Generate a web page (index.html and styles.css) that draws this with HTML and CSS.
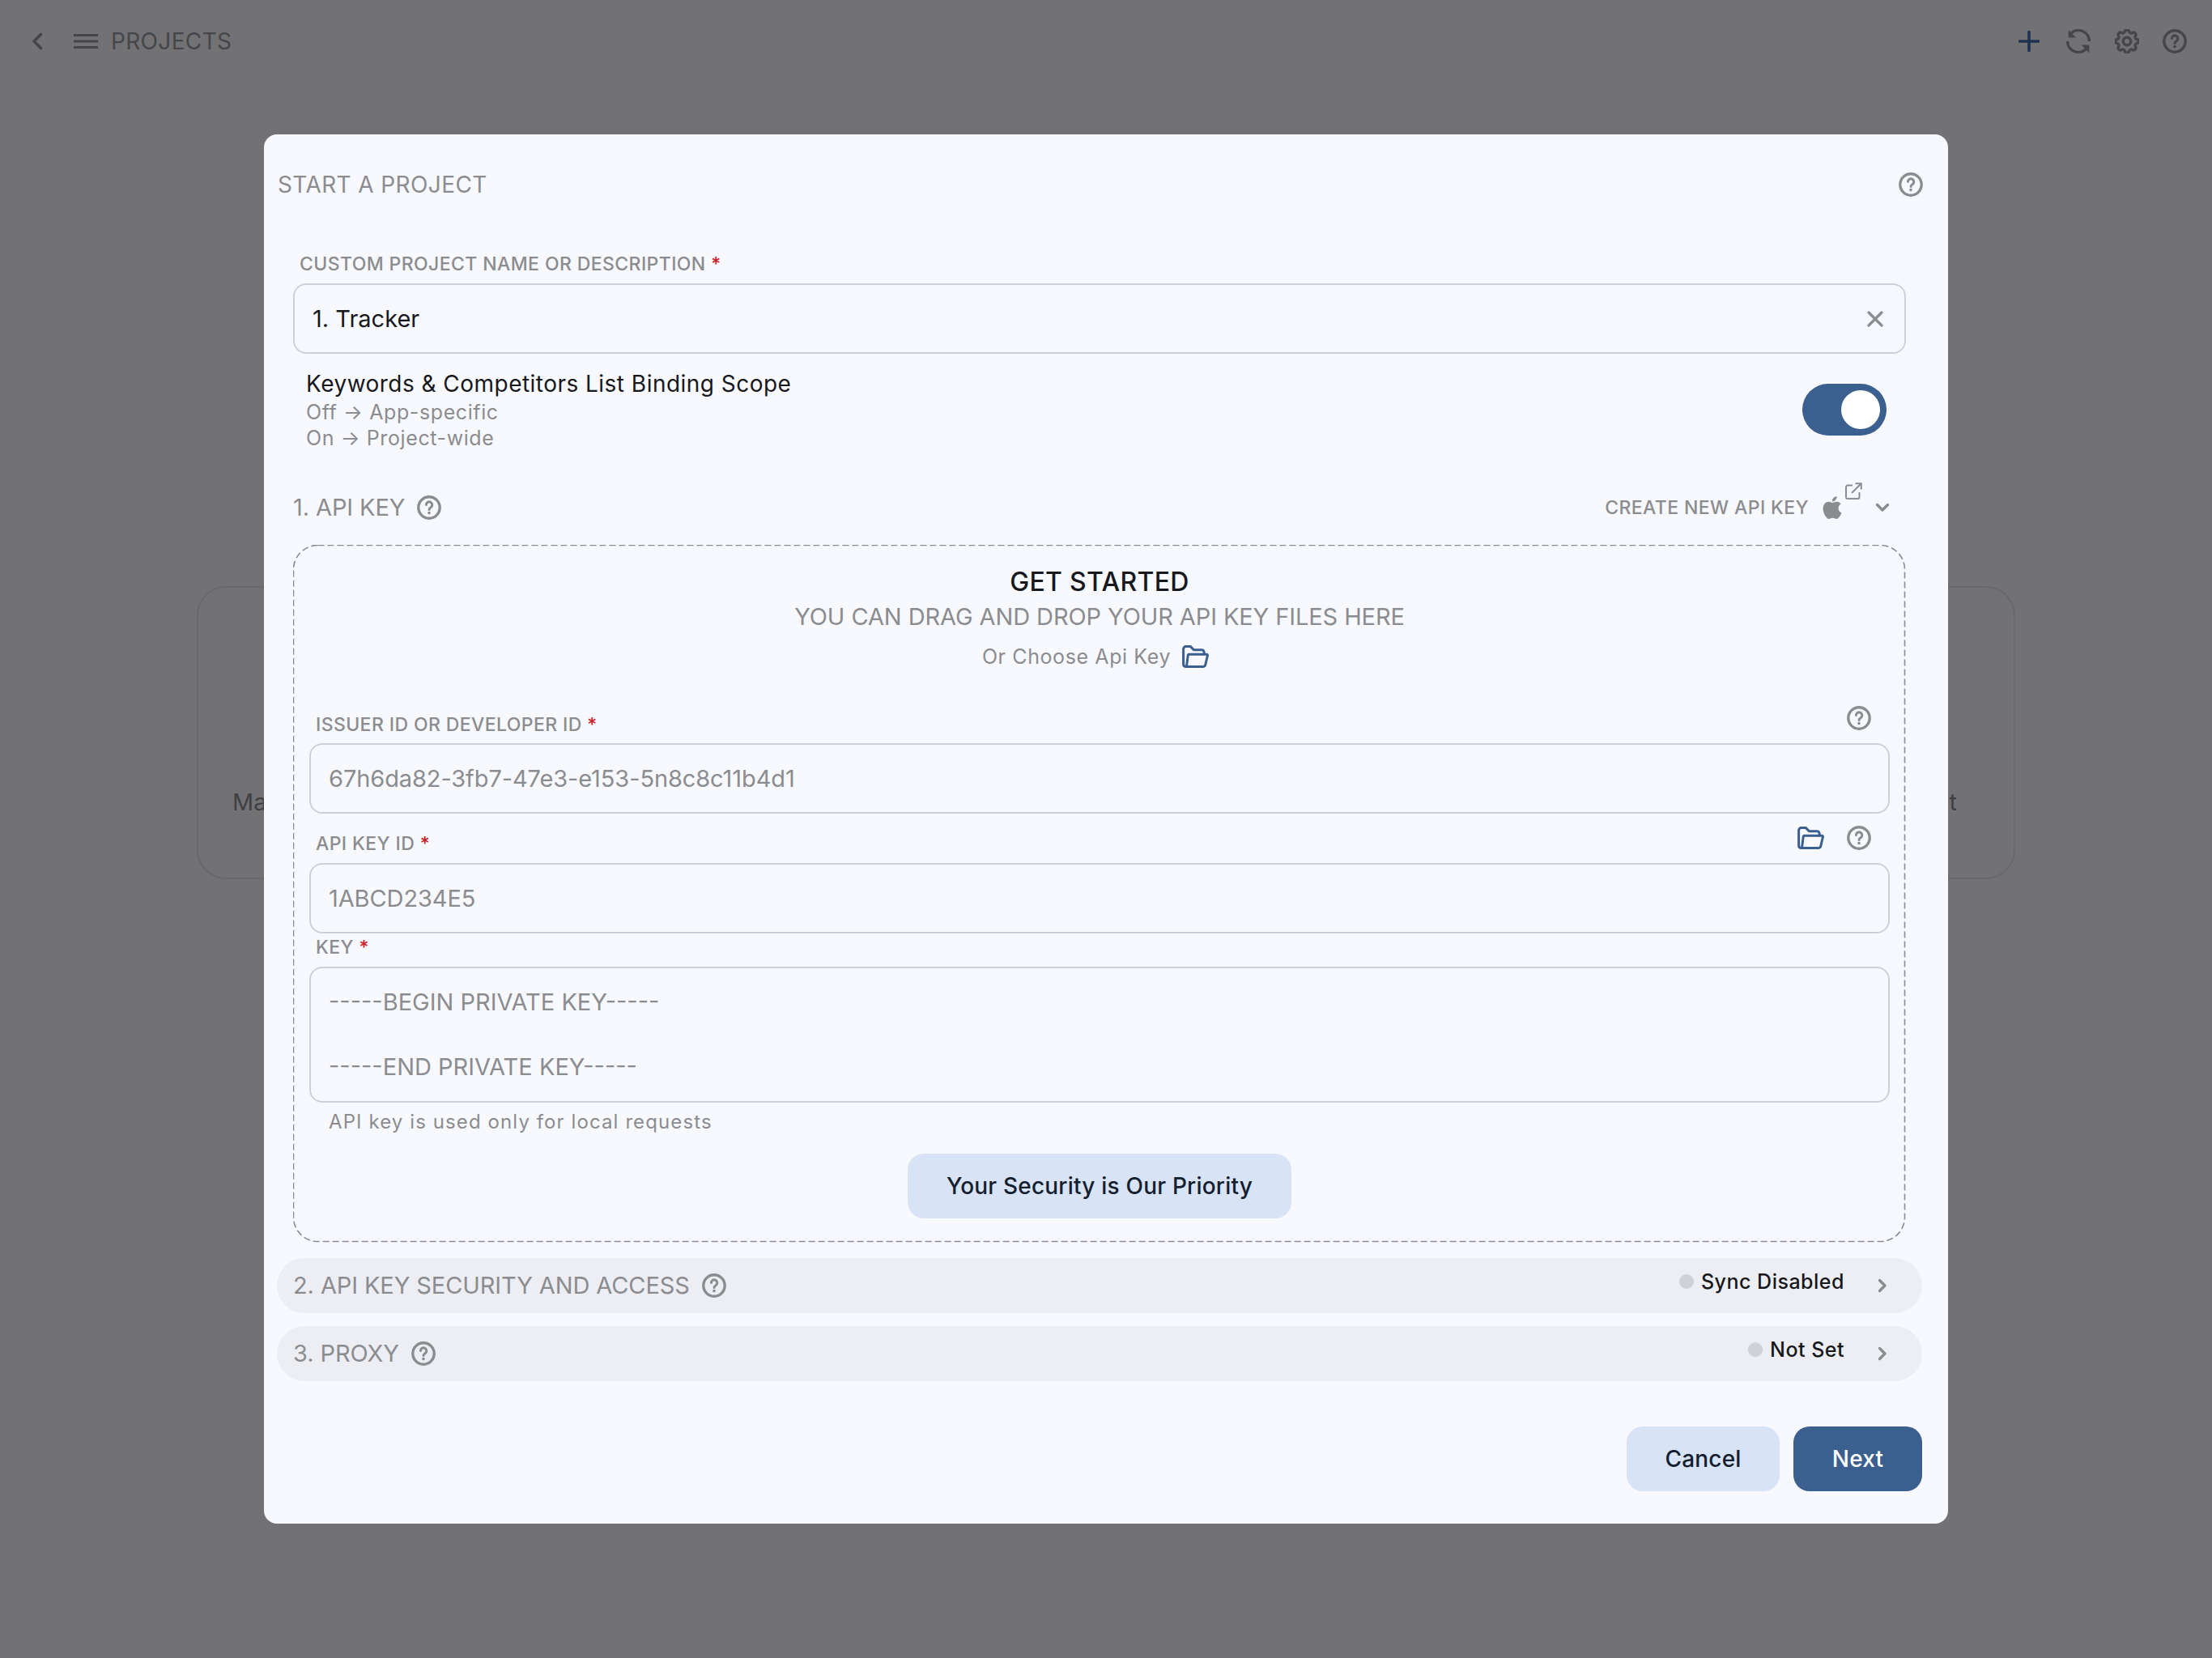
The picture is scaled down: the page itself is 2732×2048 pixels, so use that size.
FILE: index.html
```html
<!DOCTYPE html>
<html lang="en">
<head>
<meta charset="utf-8">
<title>Projects</title>
<link rel="stylesheet" href="styles.css">
</head>
<body>
<svg class="defs" width="0" height="0" aria-hidden="true">
  <defs>
    <symbol id="help" viewBox="0 0 30 30">
      <circle cx="15" cy="15" r="13.2" fill="none" stroke="currentColor" stroke-width="3.4"/>
      <path d="M11.4 11.6a3.7 3.7 0 1 1 5.7 3.1c-1.2.8-2 1.3-2 2.7" fill="none" stroke="currentColor" stroke-width="3" stroke-linecap="round"/>
      <circle cx="15" cy="21.6" r="1.8" fill="currentColor"/>
    </symbol>
    <symbol id="folder" viewBox="0 0 33 28">
      <path d="M5 26.4H4.4A3 3 0 0 1 1.6 23.4V4.6A3 3 0 0 1 4.6 1.6H10.4L14.4 5.8H24.2A3 3 0 0 1 27.2 8.8V11" fill="none" stroke="currentColor" stroke-width="3" stroke-linejoin="round" stroke-linecap="round"/>
      <path d="M8.8 11.2H30.2A1.3 1.3 0 0 1 31.4 12.8L28.8 24A3 3 0 0 1 25.9 26.4H4.4A1.2 1.2 0 0 0 5.6 25.4L7.2 12.6A1.6 1.6 0 0 1 8.8 11.2Z" fill="none" stroke="currentColor" stroke-width="3" stroke-linejoin="round"/>
    </symbol>
    <symbol id="chev-right" viewBox="0 0 12 18">
      <path d="M2.5 2.5L9 9L2.5 15.5" fill="none" stroke="currentColor" stroke-width="3.4" stroke-linecap="round" stroke-linejoin="round"/>
    </symbol>
  </defs>
</svg>

<div class="page">
  <header class="topbar">
    <div class="topbar-left">
      <svg class="back" viewBox="0 0 14 22" width="14" height="22"><path d="M11.5 2.5L3 11L11.5 19.5" fill="none" stroke="currentColor" stroke-width="3.6" stroke-linecap="round" stroke-linejoin="round"/></svg>
      <svg class="burger" viewBox="0 0 30 20" width="30" height="20"><path d="M0 2.5H30M0 10H30M0 17.5H30" fill="none" stroke="currentColor" stroke-width="3.2"/></svg>
      <span class="topbar-title">PROJECTS</span>
    </div>
    <div class="topbar-right">
      <svg class="plus" viewBox="0 0 26 26" width="26" height="26"><path d="M13 1.5V24.5M1.5 13H24.5" fill="none" stroke="currentColor" stroke-width="3.6" stroke-linecap="round"/></svg>
      <svg class="top-icon" viewBox="0 0 30 30" width="30" height="30"><path d="M5.4 5.5A13.4 13.4 0 0 1 28.4 15" fill="none" stroke="currentColor" stroke-width="3.4"/><path d="M1.6 15A13.4 13.4 0 0 0 24.6 24.5" fill="none" stroke="currentColor" stroke-width="3.4"/><path d="M2.6 1V10.4H12Z" fill="currentColor"/><path d="M28.4 29.4V19.6H18.6Z" fill="currentColor"/></svg>
      <svg class="top-icon" viewBox="3 2.5 18 19" width="30" height="30"><path d="M10.325 4.317c.426 -1.756 2.924 -1.756 3.35 0a1.724 1.724 0 0 0 2.573 1.066c1.543 -.94 3.31 .826 2.37 2.37a1.724 1.724 0 0 0 1.065 2.572c1.756 .426 1.756 2.924 0 3.35a1.724 1.724 0 0 0 -1.066 2.573c.94 1.543 -.826 3.31 -2.37 2.37a1.724 1.724 0 0 0 -2.572 1.065c-.426 1.756 -2.924 1.756 -3.35 0a1.724 1.724 0 0 0 -2.573 -1.066c-1.543 .94 -3.31 -.826 -2.37 -2.37a1.724 1.724 0 0 0 -1.065 -2.572c-1.756 -.426 -1.756 -2.924 0 -3.35a1.724 1.724 0 0 0 1.066 -2.573c-.94 -1.543 .826 -3.31 2.37 -2.37c1 .608 2.296 .07 2.572 -1.065z" fill="none" stroke="currentColor" stroke-width="2.2"/><circle cx="12" cy="12" r="3" fill="none" stroke="currentColor" stroke-width="2.2"/></svg>
      <svg class="top-icon" width="30" height="30"><use href="#help"/></svg>
    </div>
  </header>

  <main class="backdrop-content">
    <div class="bg-card">
      <span>Ma</span>
      <span>t</span>
    </div>
  </main>

  <section class="modal">
    <div class="modal-title-row">
      <h2 class="modal-title">START A PROJECT</h2>
      <svg class="help" width="30" height="30"><use href="#help"/></svg>
    </div>

    <div class="modal-body">
      <div class="label label-first">CUSTOM PROJECT NAME OR DESCRIPTION <span class="req">*</span></div>
      <div class="input input-name">
        <span class="input-value">1. Tracker</span>
        <svg class="clear" viewBox="0 0 20 20" width="20" height="20"><path d="M2 2L18 18M18 2L2 18" fill="none" stroke="currentColor" stroke-width="3.2" stroke-linecap="round"/></svg>
      </div>

      <div class="scope">
        <div class="scope-text">
          <div class="scope-title">Keywords &amp; Competitors List Binding Scope</div>
          <div class="scope-line">Off → App-specific</div>
          <div class="scope-line">On → Project-wide</div>
        </div>
        <div class="toggle"><span class="knob"></span></div>
      </div>

      <div class="api-head">
        <div class="section-title">1. API KEY <svg class="help" width="30" height="30"><use href="#help"/></svg></div>
        <div class="api-link">
          <span>CREATE NEW API KEY</span>
          <span class="apple-wrap">
            <svg class="apple" viewBox="0 0 24 24" width="28" height="30"><path fill="currentColor" d="M12.152 6.896c-.948 0-2.415-1.078-3.96-1.04-2.04.027-3.91 1.183-4.961 3.014-2.117 3.675-.546 9.103 1.519 12.09 1.013 1.454 2.208 3.09 3.792 3.039 1.52-.065 2.09-.987 3.935-.987 1.831 0 2.35.987 3.96.948 1.637-.026 2.676-1.48 3.676-2.948 1.156-1.688 1.636-3.325 1.662-3.415-.039-.013-3.182-1.221-3.22-4.857-.026-3.04 2.48-4.494 2.597-4.559-1.429-2.09-3.623-2.324-4.39-2.376-2-.156-3.675 1.09-4.61 1.09zM15.53 3.83c.843-1.012 1.4-2.427 1.245-3.83-1.207.052-2.662.805-3.532 1.818-.78.896-1.454 2.338-1.273 3.714 1.338.104 2.715-.688 3.559-1.701"/></svg>
            <svg class="ext" viewBox="0 0 21 21" width="21" height="21"><path d="M9 3.5H3A2 2 0 0 0 1 5.5V18A2 2 0 0 0 3 20H15.5A2 2 0 0 0 17.5 18V12M8 13L19.5 1.5M12.5 1.2H19.8V8.5" fill="none" stroke="currentColor" stroke-width="2"/></svg>
          </span>
          <svg class="chev-down" viewBox="0 0 18 12" width="18" height="12"><path d="M2.5 2.5L9 9L15.5 2.5" fill="none" stroke="currentColor" stroke-width="3.4" stroke-linecap="round" stroke-linejoin="round"/></svg>
        </div>
      </div>

      <div class="dropzone">
        <svg class="dash" width="1992" height="862"><rect x="0.5" y="0.5" width="1990" height="860" rx="30" ry="30"/></svg>
        <div class="get-started">GET STARTED</div>
        <div class="drag">YOU CAN DRAG AND DROP YOUR API KEY FILES HERE</div>
        <div class="choose"><span>Or Choose Api Key</span><svg class="folder" width="33" height="28"><use href="#folder"/></svg></div>

        <div class="field-head field-head-issuer">
          <div class="label">ISSUER ID OR DEVELOPER ID <span class="req">*</span></div>
          <svg class="help" width="30" height="30"><use href="#help"/></svg>
        </div>
        <div class="input input-field"><span class="input-muted id-value">67h6da82-3fb7-47e3-e153-5n8c8c11b4d1</span></div>

        <div class="field-head field-head-key">
          <div class="label">API KEY ID <span class="req">*</span></div>
          <div class="field-icons">
            <svg class="folder" width="33" height="28"><use href="#folder"/></svg>
            <svg class="help" width="30" height="30"><use href="#help"/></svg>
          </div>
        </div>
        <div class="input input-field"><span class="input-muted id-value">1ABCD234E5</span></div>

        <div class="label label-key">KEY <span class="req">*</span></div>
        <div class="input textarea">
          <span class="input-muted">-----BEGIN PRIVATE KEY-----</span>
          <span class="input-muted blank">&nbsp;</span>
          <span class="input-muted">-----END PRIVATE KEY-----</span>
        </div>
        <div class="note">API key is used only for local requests</div>
        <div class="security-wrap"><button class="btn btn-security">Your Security is Our Priority</button></div>
      </div>
    </div>

    <div class="accordion acc-security">
      <div class="section-title">2. API KEY SECURITY AND ACCESS <svg class="help" width="30" height="30"><use href="#help"/></svg></div>
      <div class="acc-right">
        <span class="status"><i class="dot"></i>Sync Disabled</span>
        <svg class="chev" width="12" height="18"><use href="#chev-right"/></svg>
      </div>
    </div>
    <div class="accordion acc-proxy">
      <div class="section-title">3. PROXY <svg class="help" width="30" height="30"><use href="#help"/></svg></div>
      <div class="acc-right">
        <span class="status"><i class="dot"></i>Not Set</span>
        <svg class="chev" width="12" height="18"><use href="#chev-right"/></svg>
      </div>
    </div>

    <div class="footer">
      <button class="btn btn-cancel">Cancel</button>
      <button class="btn btn-next">Next</button>
    </div>
  </section>
</div>
</body>
</html>
```

FILE: styles.css
```css
* { box-sizing: border-box; }
html, body { margin: 0; padding: 0; }
body {
  width: 2732px;
  height: 2048px;
  overflow: hidden;
  background: #727274;
  font-family: Inter, "Liberation Sans", sans-serif;
  color: #17181c;
}
.defs { position: absolute; }
svg { display: block; flex: none; }

.page { position: relative; width: 2732px; height: 2048px; }

.topbar {
  height: 102px;
  display: flex;
  align-items: center;
  justify-content: space-between;
  padding: 0 31px 0 39px;
  color: #45464a;
}
.topbar-left { display: flex; align-items: center; }
.back { margin-right: 38px; }
.burger { margin-right: 16px; }
.topbar-title { font-size: 28px; line-height: 40px; letter-spacing: 0.35px; }
.topbar-right { display: flex; align-items: center; }
.plus { color: #1f3350; margin-right: 33px; }
.top-icon { margin-left: 29.5px; }
.plus + .top-icon { margin-left: 0; }

.backdrop-content { padding: 622px 243px 0; }
.bg-card {
  height: 362px;
  border: 2px solid #69696b;
  border-radius: 36px;
  padding: 0 70px 75px 42px;
  display: flex;
  align-items: flex-end;
  justify-content: space-between;
  font-size: 29px;
  line-height: 36px;
  color: #3f4044;
}

.modal {
  position: absolute;
  left: 326px;
  top: 166px;
  width: 2080px;
  height: 1716px;
  padding: 38px 32px 39px 16px;
  background: #f8f9fe;
  border-radius: 16px;
  display: flex;
  flex-direction: column;
  color: #17181c;
}
.modal-title-row {
  height: 48px;
  display: flex;
  align-items: center;
  justify-content: space-between;
  margin-right: -1px;
}
.modal-title { margin: 0; padding-left: 1px; font-size: 28px; line-height: 40px; font-weight: 400; letter-spacing: 0.4px; color: #8b8c90; }
.help { color: #8b8c90; }
.modal-body { padding: 0 20px; display: flex; flex-direction: column; }

.label { height: 30px; font-size: 23px; line-height: 30px; letter-spacing: 0.4px; font-weight: 500; color: #8b8c90; padding-left: 8px; }
.req { color: #c9202a; }
.label-first { margin-top: 59px; }

.input {
  border: 2px solid #d0d1d6;
  border-radius: 16px;
  display: flex;
  align-items: center;
  padding: 0 22px;
  font-size: 29px;
  line-height: 40px;
}
.input-name { height: 87px; margin-top: 9px; justify-content: space-between; }
.input-value { color: #17181c; }
.input-muted { color: #8b8c90; }
.id-value { letter-spacing: -0.1px; }
.clear { color: #8b8c90; margin-right: 4px; }
.input-field { height: 87px; }

.scope {
  margin-top: 19px;
  padding: 0 24px 0 16px;
  display: flex;
  align-items: center;
  justify-content: space-between;
}
.scope-title { font-size: 28px; line-height: 36px; letter-spacing: 0.47px; margin-bottom: 1px; }
.scope-line { font-size: 25px; line-height: 32px; letter-spacing: 0.6px; color: #8b8c90; }
.toggle {
  width: 104px;
  height: 64px;
  margin-bottom: 2px;
  border-radius: 32px;
  background: #3b5f8f;
  display: flex;
  align-items: center;
  justify-content: flex-end;
  padding-right: 8px;
}
.knob { width: 48px; height: 48px; border-radius: 50%; background: #fff; }

.api-head {
  margin-top: 46px;
  height: 48px;
  display: flex;
  align-items: center;
  justify-content: space-between;
}
.section-title {
  display: flex;
  align-items: center;
  gap: 15px;
  font-size: 29px;
  line-height: 40px;
  letter-spacing: -0.1px;
  color: #8b8c90;
}
.api-link {
  display: flex;
  align-items: center;
  font-size: 23px;
  letter-spacing: 0.4px;
  font-weight: 500;
  color: #8b8c90;
  padding-right: 20px;
}
.apple-wrap { position: relative; display: block; width: 28px; height: 30px; margin: 0 39px 0 15px; }
.ext { position: absolute; left: 30px; top: -16px; }
.chev-down { color: #8b8c90; }

.dropzone {
  position: relative;
  margin-top: 22px;
  height: 860px;
  padding: 26px 20px 0;
}
.dash { position: absolute; left: 0; top: 0; }
.dash rect { fill: none; stroke: #8b8c90; stroke-width: 1.6; stroke-dasharray: 8 4; }
.get-started { text-align: center; font-size: 32px; line-height: 40px; font-weight: 500; letter-spacing: 0.3px; }
.drag { margin-top: 3px; text-align: center; font-size: 29px; line-height: 40px; letter-spacing: -0.1px; color: #8b8c90; }
.choose {
  margin-top: 11px;
  height: 36px;
  display: flex;
  align-items: center;
  justify-content: center;
  gap: 14px;
  padding-right: 10px;
  font-size: 25px;
  letter-spacing: 0.6px;
  color: #8b8c90;
}
.folder { color: #3b5f8f; }

.field-head { display: flex; align-items: flex-start; justify-content: space-between; padding-right: 23px; }
.field-head .label { align-self: flex-end; }
.field-head-issuer { height: 38px; margin-top: 43px; margin-bottom: 8px; }
.field-head-key { height: 37px; margin-top: 15px; margin-bottom: 9px; }
.field-icons { display: flex; align-items: center; gap: 28px; }
.label-key { margin-top: 2px; margin-bottom: 9px; }
.textarea { height: 168px; flex-direction: column; align-items: flex-start; padding: 22px 22px 0; }
.note { margin-top: 9px; padding-left: 24px; font-size: 24px; line-height: 30px; letter-spacing: 1.1px; color: #8b8c90; }
.security-wrap { margin-top: 24px; display: flex; justify-content: center; }

.btn {
  border: 0;
  height: 80px;
  border-radius: 20px;
  font-family: inherit;
  font-size: 28px;
  letter-spacing: 0.2px;
  font-weight: 500;
  padding: 0;
}
.btn-security { width: 474px; background: #d8e3f6; color: #14202f; }

.accordion {
  height: 68px;
  border-radius: 34px;
  background: #edeef3;
  display: flex;
  align-items: center;
  justify-content: space-between;
  padding: 0 43px 0 20px;
}
.acc-security { margin-top: 21px; }
.acc-proxy { margin-top: 16px; }
.acc-right { display: flex; align-items: center; gap: 41px; }
.status {
  display: flex;
  align-items: center;
  gap: 9px;
  font-size: 25px;
  line-height: 30px;
  letter-spacing: 0.5px;
  font-weight: 500;
  color: #17181c;
  margin-bottom: 10px;
}
.dot { width: 18px; height: 18px; border-radius: 50%; background: #d0d1d6; }
.chev { color: #8b8c90; }

.footer { margin-top: 56px; display: flex; justify-content: flex-end; gap: 17px; }
.btn-cancel { width: 189px; background: #d8e3f6; color: #14202f; }
.btn-next { width: 159px; background: #3b5f8f; color: #fff; }
```
